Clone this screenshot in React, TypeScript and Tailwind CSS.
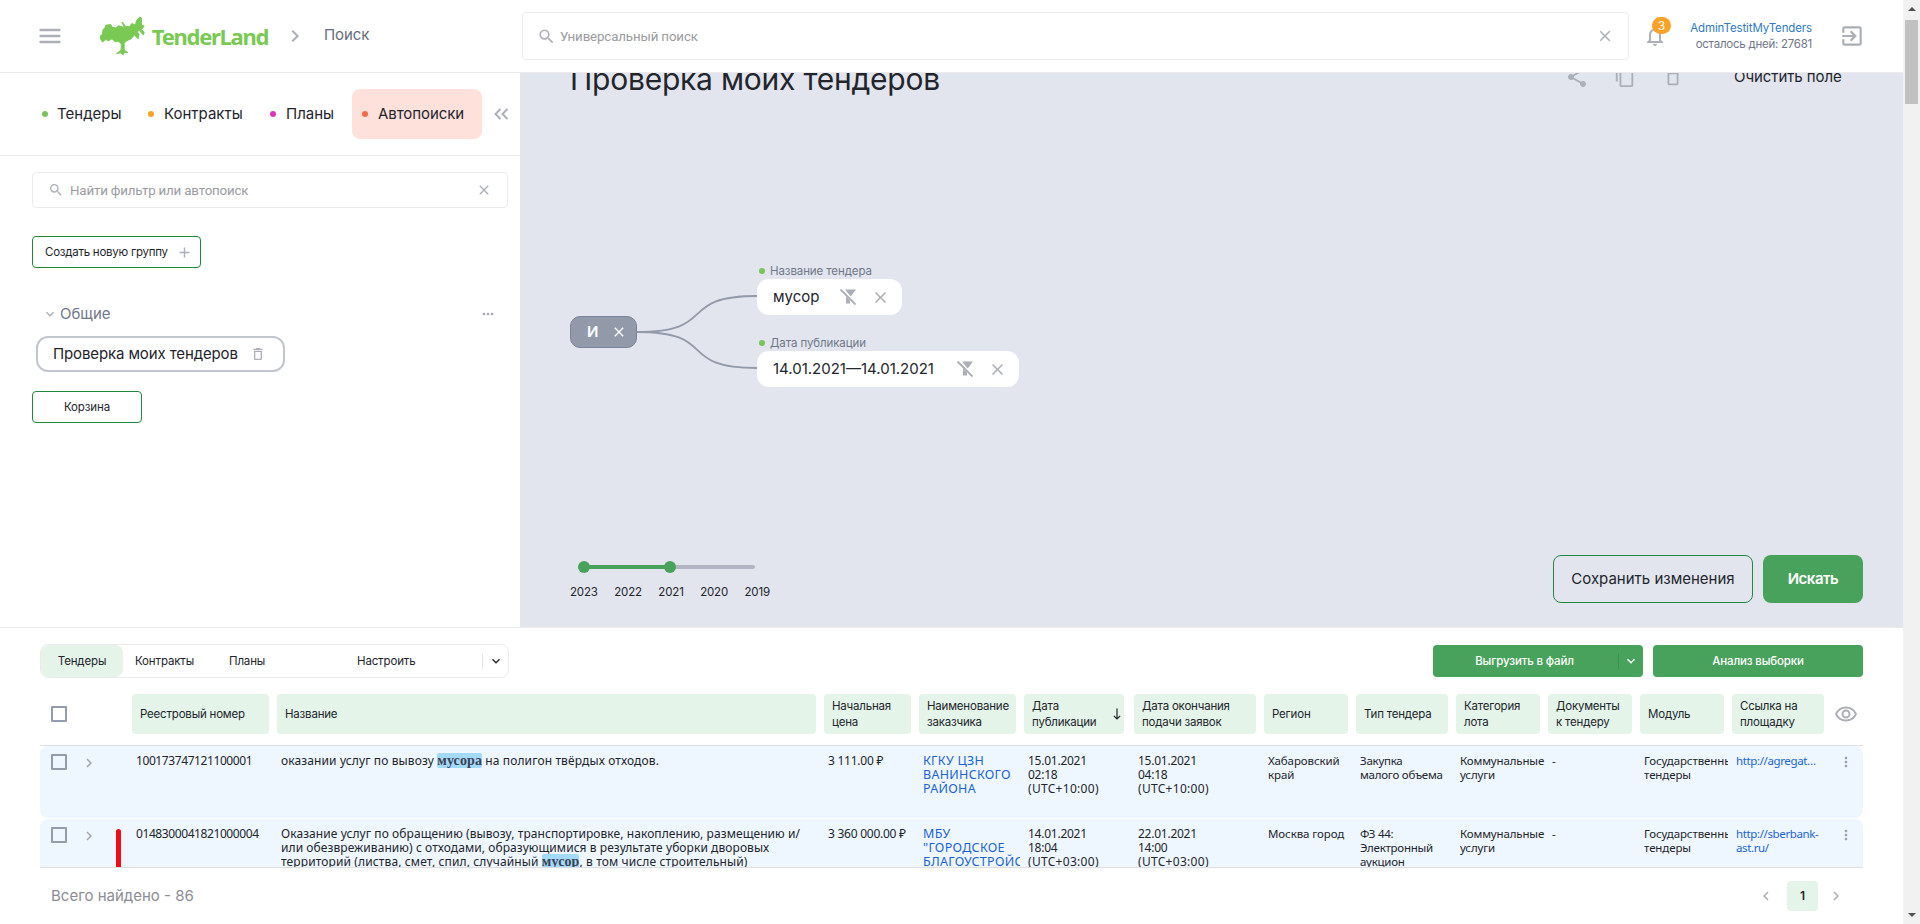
import React from "react";
import {
  MdSearch, MdClose, MdNotificationsNone, MdExitToApp, MdShare, MdContentCopy, MdDeleteOutline,
  MdOutlineRemoveRedEye, MdMoreVert, MdMoreHoriz, MdChevronRight, MdChevronLeft, MdExpandMore, MdAdd,
} from "react-icons/md";

function Logo() {
  return (
    <div className="flex items-center text-[#7ac955]">
      <svg width="47" height="42" viewBox="300 48 141 126" fill="currentColor">
        <path d="M301 118L300 112L308 105L309 92L316 84L318 77L334 75L338 83L350 86L358 79L376 84L369 67L381 81L392 82L400 72L412 76L414 64L424 52L430 54L431 76L439 80L431 90L439 100L436 108L424 94L417 97L423 108L420 120L408 108L398 120L384 126L376 134L376 156L388 163L375 163L372 171L366 164L352 166L366 156L367 136L358 128L346 128L338 120L326 126L318 122L308 130Z" stroke="currentColor" strokeWidth="3" strokeLinejoin="round" />
      </svg>
      <span className="ml-[7px] font-['Noto_Sans'] text-[22px] leading-[26px] font-bold tracking-[-1.3px]">TenderLand</span>
    </div>
  );
}

function FilterOff() {
  return (
    <svg width="18" height="18" viewBox="0 0 18 18" fill="#acaeb8">
      <path d="M6 1.500h11l-4.300 5.800-1 1.200zM7 8.500l4 4v3h-4z" />
      <path d="M1.500 1.500l15 15" stroke="#acaeb8" strokeWidth="1.800" />
    </svg>
  );
}

const modules = [
  { label: "Тендеры", dot: "bg-[#7ac35a] mr-[9px]", box: "w-[106px]" },
  { label: "Контракты", dot: "bg-[#ffa126] mr-[10px]", box: "w-[122px]" },
  { label: "Планы", dot: "bg-[#dc35bd] mr-[10px]", box: "w-[92px]" },
];

const columns = [
  { title: "Реестровый номер", w: "w-[137px]", gap: "mr-2" },
  { title: "Название", w: "w-[539px]", gap: "mr-2" },
  { title: "Начальная\nцена", w: "w-[87px]", gap: "mr-2" },
  { title: "Наименование\nзаказчика", w: "w-[97px]", gap: "mr-2" },
  { title: "Дата\nпубликации", w: "w-[100px]", gap: "mr-[10px]", sort: true },
  { title: "Дата окончания\nподачи заявок", w: "w-[122px]", gap: "mr-2" },
  { title: "Регион", w: "w-[84px]", gap: "mr-2" },
  { title: "Тип тендера", w: "w-[92px]", gap: "mr-2" },
  { title: "Категория\nлота", w: "w-[84px]", gap: "mr-2" },
  { title: "Документы\nк тендеру", w: "w-[84px]", gap: "mr-2" },
  { title: "Модуль", w: "w-[84px]", gap: "mr-2" },
  { title: "Ссылка на\nплощадку", w: "w-[92px]", gap: "mr-0" },
];

function Mark({ children }: { children: React.ReactNode }) {
  return (
    <span className="rounded-[2px] bg-[#a3d9f9] font-['Liberation_Serif'] text-[14px] leading-[14px] font-bold tracking-[0.1px] text-[#3b4255]">
      {children}
    </span>
  );
}

type Row = {
  id: string; name: React.ReactNode; price: string; customer: string; published: string; deadline: string; zone: string;
  region: string; kind: string; link: string; flag?: boolean;
};

const rows: Row[] = [
  {
    id: "100173747121100001",
    name: <span className="tracking-[0.12px]">оказании услуг по вывозу <Mark>мусора</Mark> на полигон твёрдых отходов.</span>,
    price: "3 111.00 ₽",
    customer: "КГКУ ЦЗН\nВАНИНСКОГО\nРАЙОНА",
    published: "15.01.2021\n02:18",
    deadline: "15.01.2021\n04:18",
    zone: "(UTC+10:00)",
    region: "Хабаровский\nкрай",
    kind: "Закупка\nмалого объема",
    link: "http://agregat…",
  },
  {
    id: "0148300041821000004",
    name: (
      <>
        Оказание услуг по обращению (вывозу, транспортировке, накоплению, размещению и/{"\n"}
        или обезвреживанию) с отходами, образующимися в результате уборки дворовых{"\n"}
        <span className="tracking-[0.12px]">территорий (листва, смет, спил, случайный <Mark>мусор</Mark>, в том числе строительный)</span>
      </>
    ),
    price: "3 360 000.00 ₽",
    customer: "МБУ\n\"ГОРОДСКОЕ\nБЛАГОУСТРОЙСТВО\"",
    published: "14.01.2021\n18:04",
    deadline: "22.01.2021\n14:00",
    zone: "(UTC+03:00)",
    region: "Москва город",
    kind: "ФЗ 44:\nЭлектронный\nаукцион",
    link: "http://sberbank-\nast.ru/",
    flag: true,
  },
];

function Cell({ className, children }: { className: string; children: React.ReactNode }) {
  return <div className={"shrink-0 overflow-hidden whitespace-pre pt-2 " + className}>{children}</div>;
}

function TableRow({ row }: { row: Row }) {
  return (
    <div className="flex h-[72px] shrink-0 rounded-lg bg-[#eef7ff] font-['Noto_Sans'] text-[12px] leading-[14px] text-[#23252c]">
      <div className="ml-[11px] mt-2 size-4 shrink-0 rounded-[1px] border-2 border-[#939cac]" />
      <MdChevronRight className="ml-[13px] mt-2 size-[18px] shrink-0 text-[#a3a5b0]" />
      <div className="ml-[18px] w-[5px] shrink-0 pt-[10px]">
        {row.flag && <div className="h-[62px] rounded-t-[3px] bg-[#f20a14]" />}
      </div>
      <Cell className="ml-[15px] w-[145px] tracking-[-0.41px]">{row.id}</Cell>
      <Cell className="w-[547px] tracking-[0.075px]">{row.name}</Cell>
      <Cell className="w-[95px] tracking-[-0.25px]">{row.price}</Cell>
      <Cell className="w-[97px] text-[12.500px] tracking-[0.3px] text-[#1a63d8]">{row.customer}</Cell>
      <Cell className="ml-2 w-[110px] tracking-[-0.25px]">{row.published}{"\n"}<span className="tracking-[0.3px]">{row.zone}</span></Cell>
      <Cell className="w-[130px] tracking-[-0.25px]">{row.deadline}{"\n"}<span className="tracking-[0.3px]">{row.zone}</span></Cell>
      <Cell className="w-[92px] text-[11.500px] tracking-[-0.1px]">{row.region}</Cell>
      <Cell className="w-[100px] text-[11.500px] tracking-[-0.25px]">{row.kind}</Cell>
      <Cell className="w-[92px] text-[11.500px] tracking-[-0.15px]">{"Коммунальные\nуслуги"}</Cell>
      <Cell className="w-[92px] text-[11.500px]">-</Cell>
      <Cell className="w-[84px] text-[11.500px] tracking-[-0.1px]">{"Государственные\nтендеры"}</Cell>
      <Cell className="ml-2 w-[96px] text-[11.500px] tracking-[-0.38px] text-[#1a63d8]">{row.link}</Cell>
      <MdMoreVert className="ml-[6px] mt-2 size-4 shrink-0 text-[#9b9ea9]" />
    </div>
  );
}

function Chip({ label, value, className, width }: { label: string; value: string; className: string; width: string }) {
  return (
    <div className={"absolute left-[187px] " + className}>
      <div className="flex h-4 items-center text-[11.500px] leading-4 tracking-[-0.1px] text-[#6f788b]">
        <span className="ml-[2px] mr-[5px] size-[6px] rounded-full bg-[#7ac35a]" />
        {label}
      </div>
      <div className={"flex h-9 items-center rounded-xl bg-white pl-4 pr-3 text-[15px] text-[#23252c] " + width}>
        <span className="grow">{value}</span>
        <FilterOff />
        <MdClose className="ml-[14px] size-[19px] text-[#acaeb8]" />
      </div>
    </div>
  );
}

export default function App() {
  return (
    <div className="flex h-[924px] w-[1920px] overflow-hidden bg-white font-['Inter','Noto_Sans',sans-serif] text-[#23252c]">
      <div className="flex w-[1903px] shrink-0 flex-col">
        <header className="flex h-[73px] shrink-0 items-center border-b border-[#ebebed]">
          <div className="flex w-[522px] items-center">
            <svg className="ml-[39px]" width="22" height="16" viewBox="0 0 22 16" stroke="#acaeb8" strokeWidth="2.300" strokeLinecap="round">
              <path d="M1.500 2h19M1.500 8h19M1.500 14h19" />
            </svg>
            <div className="ml-[39px] w-[168px]"><Logo /></div>
            <MdChevronRight className="ml-[15px] size-6 text-[#acaeb8]" />
            <span className="ml-[17px] pb-[2px] text-[15px] leading-5 tracking-[-0.1px] text-[#666d7c]">Поиск</span>
          </div>
          <div className="flex h-12 w-[1107px] items-center rounded-[4px] border border-[#ebebed] pl-[14px] pr-[14px]">
            <MdSearch className="size-[19px] text-[#acaeb8]" />
            <span className="ml-1 grow pt-px font-['Roboto'] text-[13.333px] tracking-[-0.15px] text-[#9b9b9f]">Универсальный поиск</span>
            <MdClose className="size-[18px] text-[#acaeb8]" />
          </div>
          <div className="relative ml-[14px]">
            <MdNotificationsNone className="size-6 text-[#acaeb8]" />
            <span className="absolute -top-[7px] left-[9px] flex h-[17px] w-[19px] items-center justify-center rounded-full bg-[#ffa126] text-[12px] text-white">3</span>
          </div>
          <div className="ml-[19px] w-[126px] text-right text-[11.500px] leading-4 whitespace-nowrap">
            <div className="tracking-[-0.12px] text-[#2f7ac6]">AdminTestitMyTenders</div>
            <div className="tracking-[-0.25px] text-[#6f788b]">осталось дней: 27681</div>
          </div>
          <MdExitToApp className="ml-[27px] size-[26px] text-[#acaeb8]" />
        </header>

        <div className="flex h-[555px] shrink-0 border-b border-[#ebebed]">
          <aside className="w-[520px] shrink-0">
            <nav className="flex h-[83px] items-center border-b border-[#ebebed] pl-[42px] text-[15px]">
              {modules.map((m) => (
                <div key={m.label} className={"flex items-center " + m.box}>
                  <span className={"size-[6px] rounded-full " + m.dot} />
                  <span>{m.label}</span>
                </div>
              ))}
              <div className="-ml-[10px] flex h-[50px] w-[130px] items-center rounded-lg bg-[#ffe1dc] pl-[10px]">
                <span className="mr-[10px] size-[6px] rounded-full bg-[#f06c48]" />
                <span className="tracking-[-0.08px]">Автопоиски</span>
              </div>
              <svg className="ml-3" width="15" height="12" viewBox="0 0 15 12" fill="none" stroke="#acaeb8" strokeWidth="2">
                <path d="M6.500 1L1.500 6l5 5M13.500 1L8.500 6l5 5" />
              </svg>
            </nav>
            <div className="ml-8 mt-4 flex h-9 w-[476px] items-center rounded-[4px] border border-[#ebebed] pl-[15px] pr-[15px]">
              <MdSearch className="size-4 text-[#acaeb8]" />
              <span className="ml-[6px] grow pt-px font-['Roboto'] text-[13.333px] tracking-[-0.18px] text-[#9b9b9f]">Найти фильтр или автопоиск</span>
              <MdClose className="size-4 text-[#acaeb8]" />
            </div>
            <div className="ml-8 mt-7 flex h-8 w-[169px] items-center rounded-[4px] border border-[#21893f] pl-3 pr-[7px] text-[11.500px]">
              <span className="grow pt-px whitespace-nowrap tracking-[-0.25px]">Создать новую группу</span>
              <MdAdd className="size-[17px] text-[#acaeb8]" />
            </div>
            <div className="ml-[42px] mt-9 flex h-5 items-center pr-[24px] text-[15px] text-[#6f788b]">
              <MdExpandMore className="size-4 text-[#acaeb8]" />
              <span className="ml-[2px] grow">Общие</span>
              <MdMoreHoriz className="size-4 text-[#a3a5b0]" />
            </div>
            <div className="ml-9 mt-3 flex h-9 w-[249px] items-center rounded-xl border-2 border-[#c1c5cd] pl-[15px] text-[15px]">
              <span className="w-[197px] tracking-[-0.12px]">Проверка моих тендеров</span>
              <MdDeleteOutline className="size-4 text-[#acaeb8]" />
            </div>
            <div className="ml-8 mt-[19px] flex h-8 w-[110px] items-center justify-center rounded-[4px] border border-[#21893f] pt-[2px] text-[11.500px] tracking-[-0.1px]">
              Корзина
            </div>
          </aside>

          <main className="flex h-[554px] w-[1383px] flex-col justify-between overflow-hidden bg-[#e2e5ed] pl-[50px] pr-10">
            <div className="-mt-[16px] flex h-10 items-center">
              <h1 className="grow pt-[3px] text-[30px] leading-10 tracking-[-0.23px]">Проверка моих тендеров</h1>
              <MdShare className="size-6 text-[#acaeb8]" />
              <MdContentCopy className="ml-[25px] size-[22px] text-[#acaeb8]" />
              <MdDeleteOutline className="ml-[26px] size-[22px] text-[#acaeb8]" />
              <span className="ml-[50px] mr-[21px] w-[108px] whitespace-nowrap text-[15px] tracking-[-0.08px]">Очистить поле</span>
            </div>

            <div className="relative mt-[6px] h-[132px] w-full">
              <svg className="absolute left-0 top-0" width="300" height="132" fill="none" stroke="#929aaa" strokeWidth="1.800">
                <path d="M67 69C150 69 105 33 187 33M67 69C150 69 105 105 187 105" />
              </svg>
              <div className="absolute left-0 top-[53px] flex h-8 w-[67px] items-center rounded-[10px] border border-[#7b8496] bg-[#929aaa] pl-4 text-[15px] font-semibold text-white">
                И
                <MdClose className="ml-[13px] size-4" stroke="currentColor" />
              </div>
              <Chip label="Название тендера" value="мусор" className="top-0" width="w-[145px]" />
              <Chip label="Дата публикации" value="14.01.2021—14.01.2021" className="top-[72px]" width="w-[262px]" />
            </div>

            <div className="flex h-[72px] items-start">
              <div className="w-[200px] pt-[6px]">
                <div className="ml-2 flex h-3 items-center">
                  <div className="z-10 size-3 rounded-full bg-[#48a25c]" />
                  <div className="-mx-1 h-1 w-[82px] bg-[#48a25c]" />
                  <div className="z-10 size-3 rounded-full bg-[#48a25c]" />
                  <div className="-ml-1 h-1 w-[83px] rounded-r bg-[#b3b5c2]" />
                </div>
                <div className="mt-[11px] flex justify-between text-[11.500px] leading-4 tracking-[-0.15px]">
                  <span>2023</span><span>2022</span><span>2021</span><span>2020</span><span>2019</span>
                </div>
              </div>
              <div className="ml-auto flex h-12 w-[200px] items-center justify-center rounded-lg border border-[#21893f] text-[15px]">
                Сохранить изменения
              </div>
              <div className="ml-[10px] flex h-12 w-[100px] items-center justify-center rounded-lg bg-[#48a25c] text-[15px] font-semibold tracking-[-0.5px] text-white">
                Искать
              </div>
            </div>
          </main>
        </div>

        <section className="flex grow flex-col pl-10 pr-10">
          <div className="mt-4 flex h-[34px] items-center text-[11.500px] tracking-[-0.15px]">
            <div className="flex h-[34px] w-[469px] items-center rounded-lg border border-[#ebebed]">
              <div className="flex h-8 w-[82px] items-center justify-center rounded-lg bg-[#e4f4e9] pt-[2px]">Тендеры</div>
              <span className="ml-3 w-[94px] pt-[2px]">Контракты</span>
              <span className="w-[128px] pt-[2px]">Планы</span>
              <span className="w-[125px] pt-[2px]">Настроить</span>
              <div className="h-4 w-px bg-[#e6e6ea]" />
              <MdExpandMore className="ml-[5px] size-4" />
            </div>
            <div className="ml-auto flex h-8 w-[210px] items-center rounded-[4px] bg-[#48a25c] font-medium text-white">
              <span className="grow pl-[18px] pt-[2px] text-center">Выгрузить в файл</span>
              <div className="ml-5 h-4 w-px bg-[#3d9451]" />
              <MdExpandMore className="mx-[4px] size-4" />
            </div>
            <div className="ml-[10px] flex h-8 w-[210px] items-center justify-center rounded-[4px] bg-[#48a25c] pt-[2px] font-medium text-white">
              Анализ выборки
            </div>
          </div>

          <div className="mt-4 flex h-10 items-center">
            <div className="ml-[11px] mr-[65px] size-4 shrink-0 rounded-[1px] border-2 border-[#939cac]" />
            {columns.map((c) => (
              <div key={c.title} className={"flex h-10 shrink-0 items-center rounded-[4px] bg-[#e4f4e9] pl-2 text-[11.500px] leading-4 tracking-[-0.2px] whitespace-pre " + c.w + " " + c.gap}>
                <span className="grow">{c.title}</span>
                {c.sort && (
                  <svg className="mr-[3px]" width="8" height="12" viewBox="0 0 8 12" fill="none" stroke="#23252c" strokeWidth="1.200">
                    <path d="M4 0.500v10.500M0.800 7.800L4 11l3.200-3.200" />
                  </svg>
                )}
              </div>
            ))}
            <MdOutlineRemoveRedEye className="ml-[10px] size-6 shrink-0 text-[#acaeb8]" />
          </div>

          <div className="mt-[11px] flex h-[123px] flex-col gap-px overflow-hidden border-y border-[#dcdee3]">
            {rows.map((r) => <TableRow key={r.id} row={r} />)}
          </div>

          <footer className="flex grow items-center pl-[11px]">
            <span className="grow text-[15px] text-[#8b8d94]">Всего найдено - 86</span>
            <MdChevronLeft className="size-[18px] text-[#acaeb8]" />
            <div className="ml-3 mr-[9px] flex h-[30px] w-[31px] items-center justify-center rounded-[4px] bg-[#e4f4e9] text-[12px] font-semibold">1</div>
            <MdChevronRight className="mr-[18px] size-[18px] text-[#acaeb8]" />
          </footer>
        </section>
      </div>

      <div className="flex w-[17px] flex-col items-center justify-between bg-[#f1f1f1] py-[7px]">
        <div className="flex flex-col items-center">
          <svg width="8" height="4" viewBox="0 0 8 4" fill="#505050"><path d="M0 4l4-4 4 4z" /></svg>
          <div className="mt-[9px] h-[84px] w-[13px] bg-[#c1c1c1]" />
        </div>
        <svg width="8" height="4" viewBox="0 0 8 4" fill="#505050"><path d="M0 0l4 4 4-4z" /></svg>
      </div>
    </div>
  );
}
